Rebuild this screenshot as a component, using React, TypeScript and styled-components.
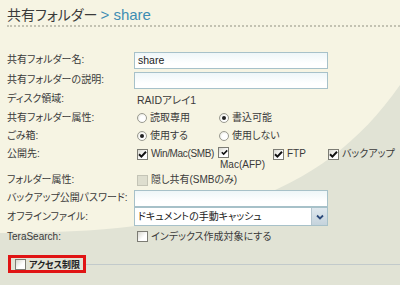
import React from "react";
import styled, { createGlobalStyle } from "styled-components";

const GlobalStyle = createGlobalStyle`
  html, body {
    margin: 0;
    padding: 0;
  }
  body {
    font-family: "Liberation Sans", "Noto Sans CJK JP", sans-serif;
    font-feature-settings: "palt";
    color: #3a3a3a;
  }
`;

type Row = { label: string; h: number; top?: boolean; content: React.ReactNode };

function Radio({ checked }: { checked?: boolean }) {
  return <RadioDot $checked={checked} />;
}

function Check({ checked, disabled }: { checked?: boolean; disabled?: boolean }) {
  return (
    <CheckBox $disabled={disabled}>
      {checked && (
        <svg width="9" height="9" viewBox="0 0 9 9">
          <path d="M1 4.2 L3.4 6.6 L8 1.8" fill="none" stroke="#111" strokeWidth="2" />
        </svg>
      )}
    </CheckBox>
  );
}

function App() {
  const rows: Row[] = [
    { label: "共有フォルダー名:", h: 20, content: <TextInput>share</TextInput> },
    { label: "共有フォルダーの説明:", h: 20, content: <TextInput /> },
    { label: "ディスク領域:", h: 18, content: <Value>RAIDアレイ1</Value> },
    {
      label: "共有フォルダー属性:",
      h: 19,
      content: (
        <Options>
          <Option $w={82}>
            <Radio /> 読取専用
          </Option>
          <Option>
            <Radio checked /> 書込可能
          </Option>
        </Options>
      ),
    },
    {
      label: "ごみ箱:",
      h: 17,
      content: (
        <Options>
          <Option $w={82}>
            <Radio checked /> 使用する
          </Option>
          <Option>
            <Radio /> 使用しない
          </Option>
        </Options>
      ),
    },
    {
      label: "公開先:",
      h: 27,
      top: true,
      content: (
        <Options>
          <Option $w={81} $tight>
            <Check checked /> Win/Mac(SMB)
          </Option>
          <Stacked $w={55}>
            <Check checked />
            <span>Mac(AFP)</span>
          </Stacked>
          <Option $w={55}>
            <Check checked /> FTP
          </Option>
          <Option>
            <Check checked /> バックアップ
          </Option>
        </Options>
      ),
    },
    {
      label: "フォルダー属性:",
      h: 18,
      content: (
        <Options>
          <Option>
            <Check disabled /> 隠し共有(SMBのみ)
          </Option>
        </Options>
      ),
    },
    { label: "バックアップ公開パスワード:", h: 18, content: <TextInput /> },
    {
      label: "オフラインファイル:",
      h: 19,
      content: (
        <Select>
          <SelectText>ドキュメントの手動キャッシュ</SelectText>
          <SelectButton>
            <svg width="8" height="6" viewBox="0 0 8 6">
              <path d="M1 1.5 L4 4.5 L7 1.5" fill="none" stroke="#2c4a7a" strokeWidth="1.8" />
            </svg>
          </SelectButton>
        </Select>
      ),
    },
    {
      label: "TeraSearch:",
      h: 21,
      content: (
        <Options>
          <Option>
            <Check /> インデックス作成対象にする
          </Option>
        </Options>
      ),
    },
  ];

  return (
    <Page>
      <GlobalStyle />
      <Backdrop viewBox="0 0 400 285" preserveAspectRatio="none">
        <path d="M0 233 C200 233 320 200 400 85 L400 285 L0 285 Z" fill="#e1e3d5" />
      </Backdrop>
      <Content>
        <Title>
          共有フォルダー <Crumb>&gt; share</Crumb>
        </Title>
        <Dotted />
        <Form>
          {rows.map((r) => (
            <FormRow key={r.label} $h={r.h} $top={r.top}>
              <Label>{r.label}</Label>
              <Field>{r.content}</Field>
            </FormRow>
          ))}
        </Form>
        <Footer>
          <Highlight>
            <Check />
            <strong>アクセス制限</strong>
          </Highlight>
          <Rule />
        </Footer>
      </Content>
    </Page>
  );
}

export default App;

const Page = styled.div`
  position: relative;
  width: 400px;
  height: 285px;
  overflow: hidden;
  background: #f6f4e3;
`;

const Backdrop = styled.svg`
  position: absolute;
  left: 0;
  top: 0;
  width: 400px;
  height: 285px;
`;

const Content = styled.div`
  position: relative;
  display: flex;
  flex-direction: column;
  padding: 5px 0 0 7px;
`;

const Title = styled.div`
  font-family: "Noto Sans CJK JP", sans-serif;
  font-size: 14px;
  line-height: 19px;
  color: #3a3a3a;
`;

const Crumb = styled.span`
  color: #3d8db3;
  font-family: "Liberation Sans", sans-serif;
  font-size: 15px;
`;

const Dotted = styled.div`
  margin-top: 1px;
  border-top: 2px dotted #c3c2b2;
`;

const Form = styled.div`
  display: flex;
  flex-direction: column;
  margin-top: 23px;
`;

const FormRow = styled.div<{ $h: number; $top?: boolean }>`
  box-sizing: border-box;
  display: grid;
  grid-template-columns: 127px 194px;
  align-items: ${({ $top }) => ($top ? "start" : "center")};
  height: ${({ $h }) => $h}px;
  padding-top: ${({ $top }) => ($top ? "3px" : "0")};
  font-size: 10px;
`;

const Label = styled.div`
  white-space: nowrap;
  line-height: 14px;
`;

const Field = styled.div`
  display: flex;
  align-items: center;
`;

const TextInput = styled.div`
  box-sizing: border-box;
  width: 194px;
  height: 17px;
  border: 1px solid #a7c1c9;
  background: linear-gradient(#eef6f8, #ffffff 70%);
  padding: 0 3px;
  line-height: 15px;
  font-size: 10.5px;
  color: #222;
`;

const Value = styled.span`
  padding-left: 3px;
  font-size: 10.5px;
`;

const Options = styled.div`
  display: flex;
  align-items: flex-start;
  padding-left: 3px;
`;

const Option = styled.label<{ $w?: number; $tight?: boolean }>`
  box-sizing: border-box;
  display: flex;
  align-items: center;
  gap: 3px;
  width: ${({ $w }) => ($w ? `${$w}px` : "auto")};
  white-space: nowrap;
  line-height: 14px;
  font-size: 10px;
  letter-spacing: ${({ $tight }) => ($tight ? "-0.35px" : "normal")};
`;

const Stacked = styled.label<{ $w: number }>`
  display: flex;
  flex-direction: column;
  width: ${({ $w }) => $w}px;
  line-height: 13px;
  & > span {
    padding-left: 2px;
    font-size: 10px;
  }
`;

const RadioDot = styled.span<{ $checked?: boolean }>`
  box-sizing: border-box;
  display: inline-flex;
  align-items: center;
  justify-content: center;
  width: 10px;
  height: 10px;
  border-radius: 50%;
  border: 1px solid #9a9a90;
  background: radial-gradient(circle at 60% 60%, #ffffff 40%, #dcdcd0);
  &::after {
    content: "";
    width: 4px;
    height: 4px;
    border-radius: 50%;
    background: ${({ $checked }) => ($checked ? "#222" : "transparent")};
  }
`;

const CheckBox = styled.span<{ $disabled?: boolean }>`
  box-sizing: border-box;
  display: inline-flex;
  align-items: center;
  justify-content: center;
  flex: none;
  width: 11px;
  height: 11px;
  border: 1px solid ${({ $disabled }) => ($disabled ? "#c4c4b6" : "#7c7c74")};
  background: ${({ $disabled }) => ($disabled ? "#dedecf" : "linear-gradient(135deg, #d8d8d0, #ffffff 60%)")};
`;

const Select = styled.div`
  box-sizing: border-box;
  display: flex;
  width: 194px;
  height: 19px;
  border: 1px solid #a7c1c9;
  background: #ffffff;
`;

const SelectText = styled.span`
  flex: 1;
  padding-left: 3px;
  line-height: 17px;
  color: #222;
`;

const SelectButton = styled.span`
  display: flex;
  align-items: center;
  justify-content: center;
  width: 15px;
  background: linear-gradient(#dfe8ee, #c5d3dc);
  border-left: 1px solid #b5c6cf;
`;

const Footer = styled.div`
  display: flex;
  align-items: center;
  margin-top: 8px;
  margin-left: 1px;
`;

const Highlight = styled.div`
  box-sizing: border-box;
  display: flex;
  align-items: center;
  gap: 3px;
  height: 18px;
  padding: 0 3px 0 4px;
  border: 3px solid #e01414;
  white-space: nowrap;
  font-family: "Noto Sans CJK JP", sans-serif;
  font-size: 9px;
  color: #222;
  & > strong {
    font-weight: 700;
  }
`;

const Rule = styled.div`
  flex: 1;
  border-top: 1px solid #c2cacb;
`;
